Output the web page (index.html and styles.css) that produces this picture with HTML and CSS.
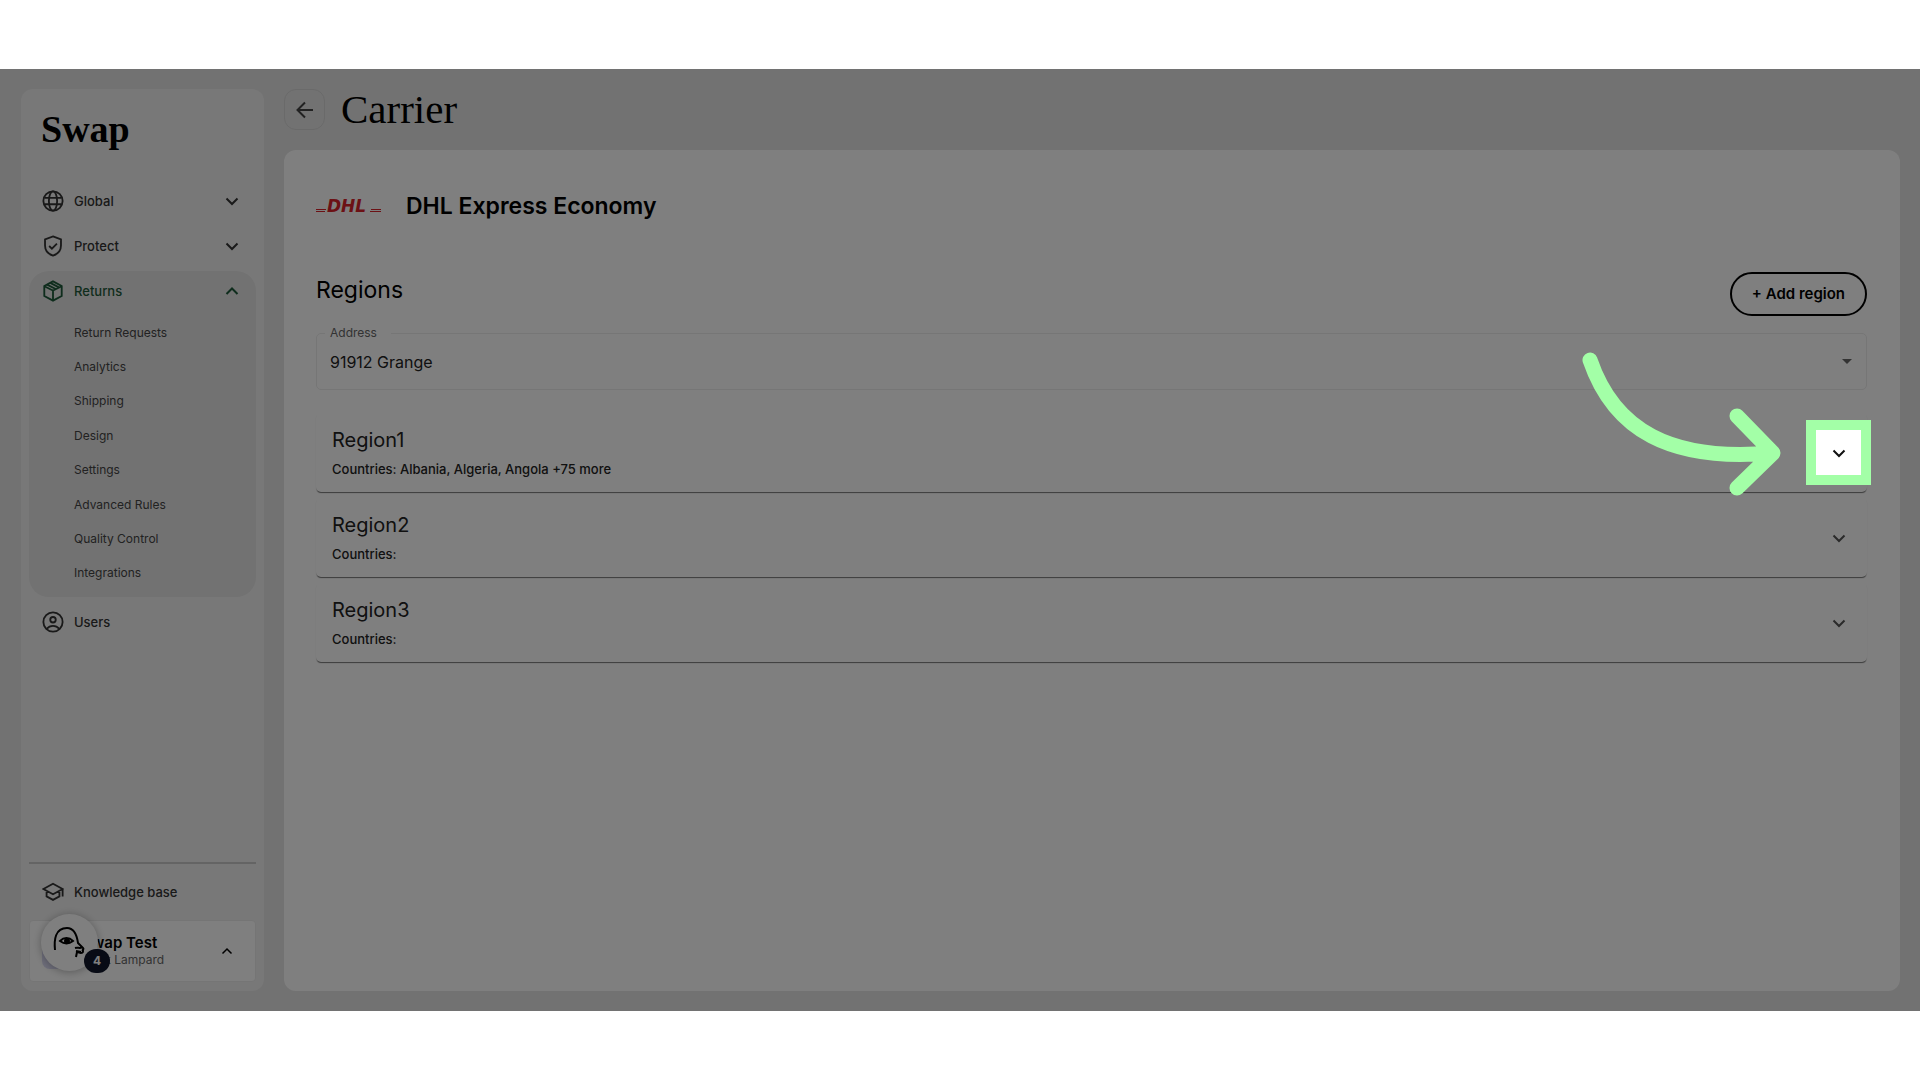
FILE: index.html
```html
<!DOCTYPE html>
<html lang="en">
<head>
    <meta charset="utf-8">
    <title>Carrier - Swap</title>
    <link rel="stylesheet" href="styles.css">
</head>
<body>
    <div class="app">
        <aside class="sidebar">
            <a class="logo" href="#">Swap</a>

            <nav class="nav">
                <button class="nav-item" type="button">
                    <svg class="nav-icon" viewBox="0 0 24 24"><circle cx="12" cy="12" r="10.500"/><ellipse cx="12" cy="12" rx="4.500" ry="10.500"/><path d="M2.500 8.500h19M2.500 15.500h19"/></svg>
                    <span>Global</span>
                    <svg class="chevron" viewBox="0 0 16 16"><path d="M2.500 5.500L8 11l5.500-5.500"/></svg>
                </button>
                <button class="nav-item" type="button">
                    <svg class="nav-icon" viewBox="0 0 24 24"><path d="M12 1.500l8.700 3.300v6.700c0 5.200-3.500 9.300-8.700 11-5.200-1.700-8.700-5.800-8.700-11V4.800z"/><path d="M7.800 12l3 3 5.500-5.500"/></svg>
                    <span>Protect</span>
                    <svg class="chevron" viewBox="0 0 16 16"><path d="M2.500 5.500L8 11l5.500-5.500"/></svg>
                </button>
                <div class="nav-group">
                    <button class="nav-item active" type="button">
                        <svg class="nav-icon" viewBox="0 0 24 24"><path d="M12 1.500l9.500 5v11l-9.500 5-9.500-5v-11z"/><path d="M2.500 6.800l9.500 4.700 9.500-4.700M12 11.500v10.500M5.500 5l9.500 4.800M9 3.200l9.500 4.800"/></svg>
                        <span>Returns</span>
                        <svg class="chevron" viewBox="0 0 16 16"><path d="M2.500 11L8 5.500l5.500 5.500"/></svg>
                    </button>
                    <div class="subnav">
                        <a href="#">Return Requests</a>
                        <a href="#">Analytics</a>
                        <a href="#">Shipping</a>
                        <a href="#">Design</a>
                        <a href="#">Settings</a>
                        <a href="#">Advanced Rules</a>
                        <a href="#">Quality Control</a>
                        <a href="#">Integrations</a>
                    </div>
                </div>
                <a class="nav-item" href="#">
                    <svg class="nav-icon" viewBox="0 0 24 24"><circle cx="12" cy="12" r="10.500"/><circle cx="12" cy="9.500" r="3"/><path d="M5 19.500c2-2.300 4.300-3.300 7-3.300s5 1 7 3.300"/></svg>
                    <span>Users</span>
                </a>
            </nav>

            <div class="sidebar-footer">
                <a class="nav-item" href="#">
                    <svg class="nav-icon" viewBox="0 0 24 24"><path d="M1.500 8.700L12 3l10.500 5.700L12 14.400zM5 10.600v6.200l7 3.800 7-3.800v-6.200M22.500 8.700v8.300"/></svg>
                    <span>Knowledge base</span>
                </a>
                <button class="account" type="button">
                    <span class="avatar"></span>
                    <span class="account-text">
                        <span class="account-name">Swap Test</span>
                        <span class="account-user">Mark Lampard</span>
                    </span>
                    <svg class="chevron" viewBox="0 0 16 16"><path d="M3.500 10.500L8 6l4.500 4.500"/></svg>
                </button>
            </div>

            <!-- Chat widget -->
            <button class="chat" type="button" aria-label="Open chat">
                <svg class="chat-face" viewBox="0 0 57 57">
                    <path d="M14 36c-1-10 0-22 12-22 8 0 10 8 11 15l5 5c1 1 0 2-1 2 2 1 1 3-1 3l-4-1-1 5"/>
                    <path d="M34 34c3-1 5 1 7-1M35 37l5 1"/>
                    <path d="M19 27c4-4 9-4 13 0-4 3-9 3-13 0z"/>
                    <circle cx="26" cy="27" r="2"/>
                </svg>
                <span class="chat-badge">4</span>
            </button>
        </aside>

        <main class="main">
            <header class="page-header">
                <button class="back" type="button" aria-label="Back">
                    <svg viewBox="0 0 20 20"><path d="M18 10H3M10 2.500L2.500 10l7.500 7.500"/></svg>
                </button>
                <h1>Carrier</h1>
            </header>

            <section class="card">
                <div class="carrier">
                    <svg class="dhl" viewBox="0 0 65 20">
                        <path d="M0 13.500h10M0 15.500h9M55 13.500h10M54 15.500h11"/>
                        <text x="11" y="16">DHL</text>
                    </svg>
                    <h2>DHL Express Economy</h2>
                </div>

                <div class="regions-header">
                    <h3>Regions</h3>
                    <button class="add-region" type="button">+ Add region</button>
                </div>

                <fieldset class="field">
                    <legend><label for="address">Address</label></legend>
                    <select id="address">
                        <option>91912 Grange</option>
                    </select>
                    <span class="caret"></span>
                </fieldset>

                <div class="regions">
                    <article class="region">
                        <div>
                            <h4>Region1</h4>
                            <p>Countries: Albania, Algeria, Angola +75 more</p>
                        </div>
                        <button class="toggle spotlight" type="button" aria-label="Expand Region1">
                            <svg class="chevron" viewBox="0 0 16 16"><path d="M2.500 5.500L8 11l5.500-5.500"/></svg>
                            <svg class="pointer" viewBox="0 0 210 150"><path d="M10 10C34 80 90 112 192 103M157 66l36 37-36 35"/></svg>
                        </button>
                    </article>
                    <article class="region">
                        <div>
                            <h4>Region2</h4>
                            <p>Countries:</p>
                        </div>
                        <button class="toggle" type="button" aria-label="Expand Region2">
                            <svg class="chevron" viewBox="0 0 16 16"><path d="M2.500 5.500L8 11l5.500-5.500"/></svg>
                        </button>
                    </article>
                    <article class="region">
                        <div>
                            <h4>Region3</h4>
                            <p>Countries:</p>
                        </div>
                        <button class="toggle" type="button" aria-label="Expand Region3">
                            <svg class="chevron" viewBox="0 0 16 16"><path d="M2.500 5.500L8 11l5.500-5.500"/></svg>
                        </button>
                    </article>
                </div>
            </section>
        </main>
    </div>
</body>
</html>
```
FILE: styles.css
```css
* {
    box-sizing: border-box;
}
body {
    display: flex;
    min-height: 100vh;
    margin: 0;
    padding: 69px 0;
    background-color: #fff;
    color: #000;
    font-family: Inter, "Liberation Sans", sans-serif;
}
h1, h2, h3, h4, p {
    margin: 0;
    font-weight: 400;
}
button, select {
    padding: 0;
    border: none;
    background: none;
    color: inherit;
    font-family: inherit;
}
a {
    color: inherit;
    text-decoration: none;
}
svg {
    flex: none;
    fill: none;
    stroke: currentColor;
    stroke-width: 2;
}
.app {
    display: flex;
    flex: 1;
    gap: 20px;
    padding: 20px 20px 20px 21px;
    background-color: #e5e5e5;
    overflow: hidden; /* keeps the spotlight shade inside the app */
}

/* Sidebar */
.sidebar {
    position: relative;
    display: flex;
    flex-direction: column;
    width: 243px;
    padding: 16px 8px 9px;
    border-radius: 12px;
    background-color: #f1f1f1;
}
.logo {
    padding-left: 12px;
    font: bold 38px/48px "Liberation Serif", serif;
}
.nav {
    display: flex;
    flex-direction: column;
    gap: 5px;
    margin-top: 28px;
}
.nav-item {
    display: flex;
    align-items: center;
    gap: 10px;
    width: 100%;
    height: 40px;
    padding: 0 16px 0 13px;
    color: #333;
    font-size: 13px;
    font-weight: 500;
}
.nav-icon {
    width: 22px;
    height: 22px;
}
.chevron {
    width: 16px;
    height: 16px;
    margin-left: auto;
}
.nav-group {
    border-radius: 20px;
    background-color: #e4e4e4;
}
.active {
    color: #1e5a3a;
}
.subnav {
    display: grid;
    grid-auto-rows: 1fr;
    align-items: center;
    height: 286px;
    padding: 4px 0 7px 45px;
    color: #444;
    font-size: 12px;
}
.sidebar-footer {
    margin-top: auto;
    padding-top: 8px;
    border-top: 2px solid #c8c8c8;
}
.account {
    display: flex;
    align-items: center;
    width: 100%;
    height: 62px;
    margin-top: 8px;
    padding: 0 20px 0 12px;
    border: 1px solid #eaeaea;
    border-radius: 4px;
    background-color: #fff;
    text-align: left;
}
.account .chevron {
    stroke-width: 1.5;
}
.avatar {
    width: 35px;
    height: 35px;
    margin-right: 5px;
    border-radius: 8px;
    background-color: #dcdcf5;
}
.account-text {
    display: flex;
    flex-direction: column;
}
.account-name {
    font-size: 15px;
    font-weight: 600;
    line-height: 18px;
}
.account-user {
    color: #666;
    font-size: 12px;
    line-height: 16px;
}
.chat {
    position: absolute;
    bottom: 20px;
    left: 20px;
    width: 57px;
    height: 57px;
    border-radius: 50%;
    background-color: #fff;
    box-shadow: 0 1px 8px rgba(0, 0, 0, 0.3);
}
.chat-face {
    width: 57px;
    height: 57px;
}
.chat-face circle {
    fill: #000;
}
.chat-badge {
    position: absolute;
    right: -12px;
    bottom: -2px;
    width: 26px;
    border-radius: 12px;
    background-color: #10162a;
    color: #fff;
    font-size: 12px;
    font-weight: 700;
    line-height: 24px;
}

/* Page */
.main {
    display: flex;
    flex: 1;
    flex-direction: column;
    gap: 20px;
}
.page-header {
    display: flex;
    align-items: center;
    gap: 16px;
    height: 41px;
}
.page-header h1 {
    font: 41px/41px "Liberation Serif", serif;
}
.back {
    display: grid;
    place-items: center;
    width: 41px;
    height: 41px;
    border: 1px solid #d4d4d4;
    border-radius: 12px;
    color: #444;
}
.back svg {
    width: 20px;
    height: 20px;
}
.card {
    flex: 1;
    padding: 36px 33px 36px 32px;
    border-radius: 12px;
    background-color: #fff;
}
.carrier {
    display: flex;
    align-items: center;
    gap: 25px;
    height: 40px;
}
.carrier h2 {
    font-size: 23px;
    font-weight: 600;
}
.dhl {
    width: 65px;
    height: 20px;
    color: #d8232a;
    stroke-width: 1;
    overflow: visible;
}
.dhl text {
    fill: currentColor;
    stroke: none;
    font: italic bold 17px "DejaVu Sans", sans-serif;
}
.regions-header {
    display: flex;
    justify-content: space-between;
    margin-top: 46px;
}
.regions-header h3 {
    font-size: 23px;
    line-height: 36px;
}
.add-region {
    padding: 0 20px;
    border: 2px solid #000;
    border-radius: 22px;
    font-size: 15px;
    font-weight: 600;
    line-height: 40px;
}
.field {
    display: flex;
    align-items: center;
    height: 65px;
    margin: 9px 0 0;
    padding: 0 14px 7px 8px;
    border: 1px solid #ececec;
    border-radius: 5px;
}
.field legend {
    padding: 0 14px 0 5px;
    color: #666;
    font-size: 12px;
    line-height: 16px;
}
.field select {
    flex: 1;
    appearance: none;
    padding-left: 5px;
    color: #222;
    font-size: 16px;
    line-height: 24px;
}
.caret {
    border: 5px solid transparent;
    border-top-color: #666;
    border-bottom: none;
}
.regions {
    display: flex;
    flex-direction: column;
    gap: 6px;
    margin-top: 23px;
}
.region {
    display: flex;
    align-items: center;
    justify-content: space-between;
    height: 79px;
    padding: 0 6px 0 16px;
    border-radius: 5px;
    box-shadow: 0 2px 1px -1px rgba(0, 0, 0, 0.4), 0 1px 1px rgba(0, 0, 0, 0.2);
    color: #222;
}
.region h4 {
    padding-top: 2px;
    font-size: 20px;
    line-height: 30px;
}
.region p {
    font-size: 13px;
    font-weight: 500;
    line-height: 28px;
}
.toggle {
    display: grid;
    place-items: center;
    width: 45px;
    height: 45px;
    color: #555;
}
.toggle .chevron {
    margin: 0;
}

/* Guide: darkens all of the app but the highlighted button */
.spotlight {
    position: relative;
    z-index: 10;
    color: #111;
    outline: 10px solid #a3ffa7;
    box-shadow: 0 0 0 3000px rgba(0, 0, 0, 0.5);
}
.pointer {
    position: absolute;
    top: -80px;
    right: 71px;
    width: 210px;
    height: 150px;
    color: #a3ffa7;
    stroke-width: 15;
    stroke-linecap: round;
    stroke-linejoin: round;
}
```
